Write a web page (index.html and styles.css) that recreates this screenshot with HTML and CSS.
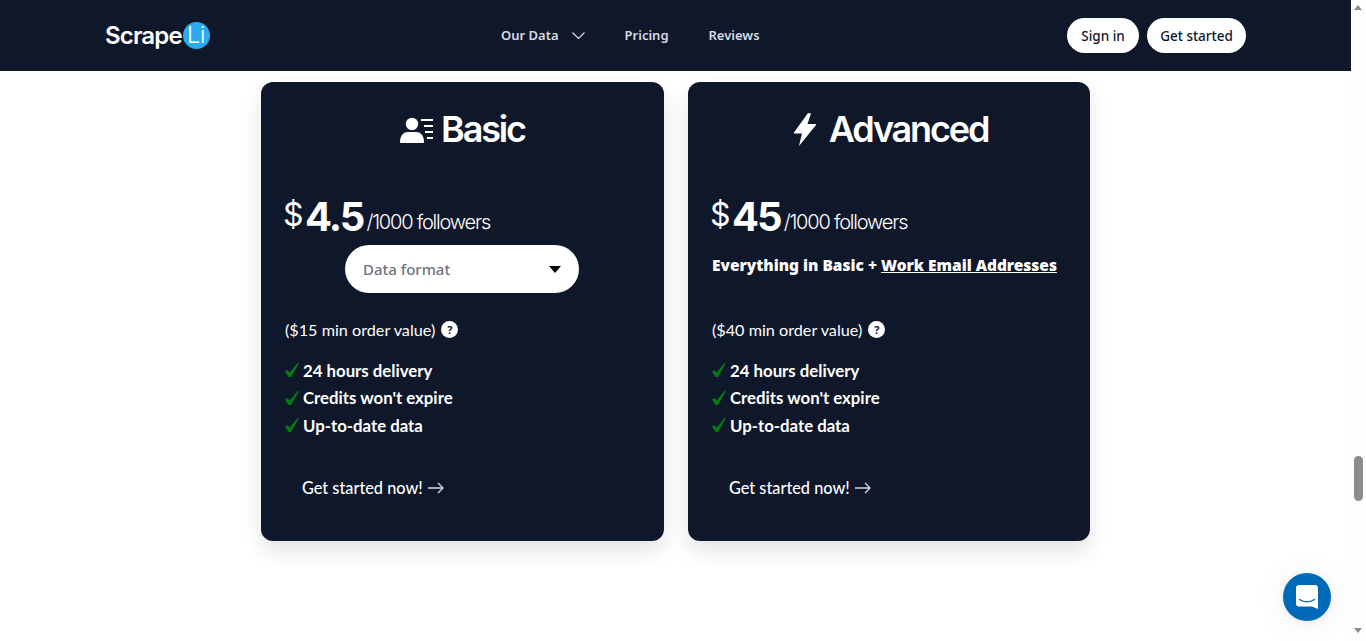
FILE: index.html
```html
<!DOCTYPE html>
<html lang="en">
<head>
<meta charset="utf-8">
<title>ScrapeLi Pricing</title>
<link rel="stylesheet" href="styles.css">
</head>
<body>
<div class="page">
  <header class="topbar">
    <a class="logo"><span class="logo-text">Scrape</span><span class="logo-badge">Li</span></a>
    <nav class="nav">
      <a class="nav-link">Our Data
        <svg class="nav-chevron" viewBox="0 0 13 7" width="13" height="7"><path d="M.5.5l6 6 6-6" fill="none" stroke="#d5dbe6" stroke-width="1.2"/></svg>
      </a>
      <a class="nav-link">Pricing</a>
      <a class="nav-link">Reviews</a>
    </nav>
    <div class="actions">
      <a class="pill pill-signin">Sign in</a>
      <a class="pill pill-start">Get started</a>
    </div>
  </header>

  <main class="plans">
    <section class="card card-basic">
      <h2 class="card-title">
        <svg class="title-icon" viewBox="0 0 34 26" width="34" height="26"><circle cx="12" cy="7" r="6.2" fill="#fff"/><path d="M0 25c0-7 4-10 8-10h8c4 0 8 3 8 10 0 .6-.4 1-1 1H1c-.6 0-1-.4-1-1z" fill="#fff"/><path d="M21 3h12M24 9h9M25 15h8M27 21h6" stroke="#fff" stroke-width="2" fill="none"/></svg>
        Basic
      </h2>
      <div class="price"><span class="currency">$</span><span class="amount">4.5</span><span class="unit">/1000 followers</span></div>
      <div class="middle">
        <div class="select"><span>Data format</span><i class="caret"></i></div>
      </div>
      <p class="min-order">($15 min order value) <span class="help">?</span></p>
      <ul class="features">
        <li><svg class="tick" viewBox="0 0 14 14" width="14" height="14"><path d="M0 8.500L2.500 7l2.200 2.500L12.500 0H14L6 14H3.500z" fill="#067a12"/></svg>24 hours delivery</li>
        <li><svg class="tick" viewBox="0 0 14 14" width="14" height="14"><path d="M0 8.500L2.500 7l2.200 2.500L12.500 0H14L6 14H3.500z" fill="#067a12"/></svg>Credits won't expire</li>
        <li><svg class="tick" viewBox="0 0 14 14" width="14" height="14"><path d="M0 8.500L2.500 7l2.200 2.500L12.500 0H14L6 14H3.500z" fill="#067a12"/></svg>Up-to-date data</li>
      </ul>
      <a class="cta">Get started now! <svg class="cta-arrow" viewBox="0 0 16 12" width="16" height="12"><path d="M0 6h15M10 1l5 5-5 5" fill="none" stroke="#d5dbe6" stroke-width="1.3"/></svg></a>
    </section>

    <section class="card card-advanced">
      <h2 class="card-title title-advanced">
        <svg class="title-bolt" viewBox="0 0 24 33" width="24" height="33"><path d="M15 0L1 19.500c-.3.5 0 1 .5 1H9L6 33l17-21c.3-.5 0-1-.5-1H14.500L18 .5z" fill="#fff"/></svg>
        Advanced
      </h2>
      <div class="price"><span class="currency">$</span><span class="amount">45</span><span class="unit">/1000 followers</span></div>
      <div class="middle">
        <p class="everything">Everything in Basic + <a class="work">Work Email Addresses</a></p>
      </div>
      <p class="min-order">($40 min order value) <span class="help">?</span></p>
      <ul class="features">
        <li><svg class="tick" viewBox="0 0 14 14" width="14" height="14"><path d="M0 8.500L2.500 7l2.200 2.500L12.500 0H14L6 14H3.500z" fill="#067a12"/></svg>24 hours delivery</li>
        <li><svg class="tick" viewBox="0 0 14 14" width="14" height="14"><path d="M0 8.500L2.500 7l2.200 2.500L12.500 0H14L6 14H3.500z" fill="#067a12"/></svg>Credits won't expire</li>
        <li><svg class="tick" viewBox="0 0 14 14" width="14" height="14"><path d="M0 8.500L2.500 7l2.200 2.500L12.500 0H14L6 14H3.500z" fill="#067a12"/></svg>Up-to-date data</li>
      </ul>
      <a class="cta">Get started now! <svg class="cta-arrow" viewBox="0 0 16 12" width="16" height="12"><path d="M0 6h15M10 1l5 5-5 5" fill="none" stroke="#d5dbe6" stroke-width="1.3"/></svg></a>
    </section>
  </main>

  <button class="chat" aria-label="Chat">
    <svg viewBox="0 0 22 24" width="22" height="24"><path d="M3 0h16c1.700 0 3 1.300 3 3v21l-6-2.600H3c-1.700 0-3-1.300-3-3V3C0 1.300 1.300 0 3 0z" fill="#fff"/><path d="M3.500 14.500c4.500 3 10.500 3 15 0" fill="none" stroke="#0069b8" stroke-width="1.500" stroke-linecap="round"/></svg>
  </button>
</div>

<div class="scrollbar">
  <i class="sb-up"></i>
  <i class="sb-thumb"></i>
  <i class="sb-down"></i>
</div>
</body>
</html>
```
FILE: styles.css
```css
* { box-sizing: border-box; }
html, body { margin: 0; height: 100%; overflow: hidden; background: #fff; }
body { font-family: "Noto Sans", sans-serif; }
a { color: inherit; text-decoration: none; }

.page { width: 1351px; height: 641px; }

.topbar {
  height: 71px;
  background: #0f172a;
  display: flex;
  align-items: center;
  padding: 0 105px;
}
.logo { display: flex; align-items: center; width: 105px; }
.logo-text { font: 600 24px/27px Inter, sans-serif; color: #fff; letter-spacing: -0.85px; }
.logo-badge {
  width: 27px; height: 27px; border-radius: 50%;
  background: #29abf2; color: #fff;
  font: 300 23px/27px Inter, sans-serif;
  text-align: center; margin-left: 1px; flex: none;
}
.nav { display: flex; align-items: center; gap: 40px; margin-left: 291px; padding-bottom: 1px; }
.nav-link {
  display: flex; align-items: center;
  font-size: 13px; font-weight: 600; color: #d5dbe6;
}
.nav-chevron { margin-left: 13px; }
.actions { margin-left: auto; display: flex; gap: 8px; }
.pill {
  height: 35px; border-radius: 18px; background: #fff; color: #0f172a;
  display: flex; align-items: center; justify-content: center;
  font-size: 13.500px; font-weight: 500;
}
.pill-signin { width: 72px; }
.pill-start { width: 99px; }

.plans { display: flex; justify-content: center; gap: 24px; padding-top: 11px; }
.card {
  width: 403px; height: 459px;
  background: #0f172a; color: #fff;
  border-radius: 12px;
  padding: 0 24px;
  box-shadow: 0 10px 20px rgba(15, 23, 42, .12);
  display: flex; flex-direction: column;
}
.card-advanced { width: 402px; }
.card-title {
  margin: 0; padding-top: 25px; height: 96px;
  display: flex; justify-content: center; align-items: flex-start; gap: 7px;
  font: 600 36px/44px Inter, sans-serif; letter-spacing: -2.150px;
}
.title-advanced { padding-left: 3px; }
.title-icon { margin-top: 10px; }
.title-bolt { margin-top: 6px; margin-right: 5px; }
.price { height: 67px; display: flex; align-items: baseline; padding-top: 14px; font-family: Inter, sans-serif; margin-left: -2px; }
.currency { font-size: 32px; font-weight: 400; position: relative; top: -5px; letter-spacing: -.5px; }
.amount { font-size: 40px; font-weight: 700; margin-left: 2px; letter-spacing: -2px; }
.unit { font-size: 20px; font-weight: 300; margin-left: 3px; letter-spacing: -1.200px; position: relative; top: -2px; }
.middle { height: 71px; }
.select {
  width: 234px; height: 48px; margin-left: 60px;
  border-radius: 24px; background: #fff; color: #6b7280;
  display: flex; align-items: center; justify-content: space-between;
  padding: 0 18px;
  font-size: 15px; font-weight: 500;
}
.caret { width: 0; height: 0; border: 6px solid transparent; border-top: 7px solid #000; border-bottom: 0; }
.everything {
  margin: 0; font: 900 15.480px/20px "Noto Sans", sans-serif;
  padding-top: 10px; white-space: nowrap;
}
.work { text-decoration: underline; }
.min-order {
  margin: 0; height: 41px; font: 400 16.200px/22px Lato, sans-serif;
  display: flex; align-items: center; gap: 6px; padding-bottom: 14px;
}
.help {
  width: 17px; height: 17px; border-radius: 50%;
  background: #fff; color: #0f172a;
  font: 700 11px/17px "Noto Sans", sans-serif;
  text-align: center;
}
.features { list-style: none; margin: 0; padding: 0; }
.features li {
  display: flex; align-items: center; gap: 4px; height: 27.500px;
  font: 700 16.800px/22px Lato, sans-serif;
}
.tick { flex: none; margin-top: -1px; }
.cta {
  margin: 37px 0 0 17px; display: flex; align-items: center; gap: 5px;
  font: 500 16.300px/22px Lato, sans-serif;
}
.chat {
  position: absolute; left: 1283px; top: 573px;
  width: 48px; height: 48px; border: 0; border-radius: 50%;
  background: #0069b8; padding: 0;
  display: flex; align-items: center; justify-content: center;
  box-shadow: 0 1px 6px rgba(0,0,0,.06), 0 2px 32px rgba(0,0,0,.08);
}

.scrollbar { position: absolute; left: 1351px; top: 0; width: 15px; height: 641px; background: #fdfdfd; }
.sb-up, .sb-down { position: absolute; left: 3px; width: 0; height: 0; border: 4.500px solid transparent; }
.sb-up { top: 5px; border-bottom: 5px solid #8c8a8f; border-top: 0; }
.sb-down { top: 628px; border-top: 5px solid #8c8a8f; border-bottom: 0; }
.sb-thumb { position: absolute; left: 3px; top: 456px; width: 9px; height: 45px; border-radius: 5px; background: #8c8a8f; }
```
